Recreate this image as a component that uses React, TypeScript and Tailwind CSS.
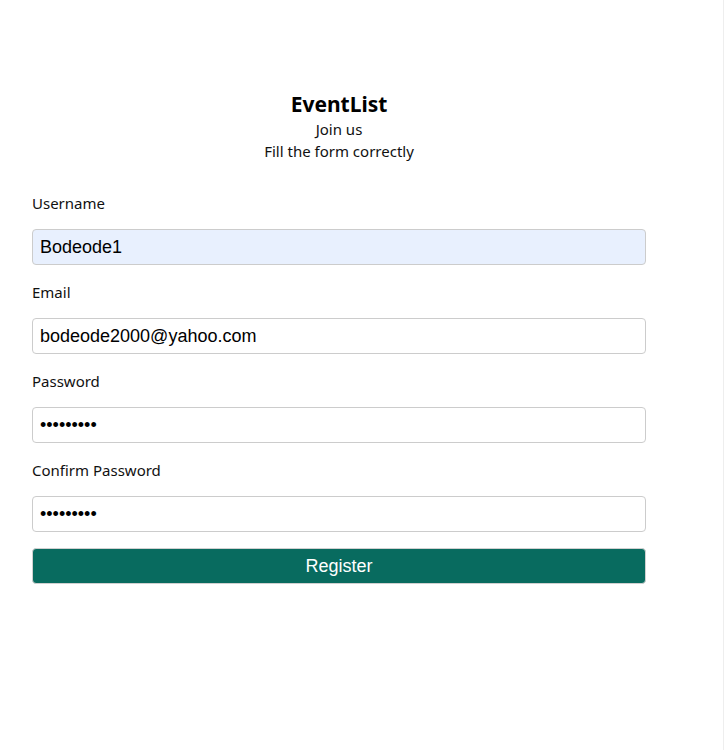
import React, { useState } from 'react'

type Field = {
  label: string
  type: string
  value: string
  filled?: boolean
}

const fields: Field[] = [
  { label: 'Username', type: 'text', value: 'Bodeode1', filled: true },
  { label: 'Email', type: 'email', value: 'bodeode2000@yahoo.com' },
  { label: 'Password', type: 'password', value: 'password1' },
  { label: 'Confirm Password', type: 'password', value: 'password1' },
]

export default function App() {
  const [values, setValues] = useState<string[]>(fields.map(f => f.value))

  return (
    <div className="w-[724px] min-h-[750px] bg-white flex font-['Noto_Sans',sans-serif] text-[#111]">
      <div className="w-[678px] px-8 pt-[90px]">
        <div className="flex flex-col items-center">
          <h2 className="text-[21px] font-bold leading-7 text-black">EventList</h2>
          <p className="text-[15px] leading-[22px]">Join us</p>
          <p className="text-[15px] leading-[22px]">Fill the form correctly</p>
        </div>

        <form className="mt-[30px] flex flex-col gap-4" onSubmit={e => e.preventDefault()}>
          {fields.map((f, i) => (
            <label key={f.label} className="flex flex-col gap-[15px]">
              <span className="text-[15px] leading-[22px]">{f.label}</span>
              <input
                className={`h-9 w-full rounded border border-[#cccccc] px-[7px] text-lg text-black font-['Liberation_Sans',Arial,sans-serif] outline-none ${f.filled ? 'bg-[#e8f0fe]' : 'bg-white'}`}
                type={f.type}
                value={values[i]}
                onChange={e => setValues(v => v.map((x, j) => (j === i ? e.target.value : x)))}
              />
            </label>
          ))}
          <button
            type="submit"
            className="h-9 w-full rounded border border-[#d0d0d0] bg-[#086b5f] text-lg text-white font-['Liberation_Sans',Arial,sans-serif]"
          >
            Register
          </button>
        </form>
      </div>
      <div className="flex-1" />
      <div className="w-px bg-[#eeeeee]" />
    </div>
  )
}
